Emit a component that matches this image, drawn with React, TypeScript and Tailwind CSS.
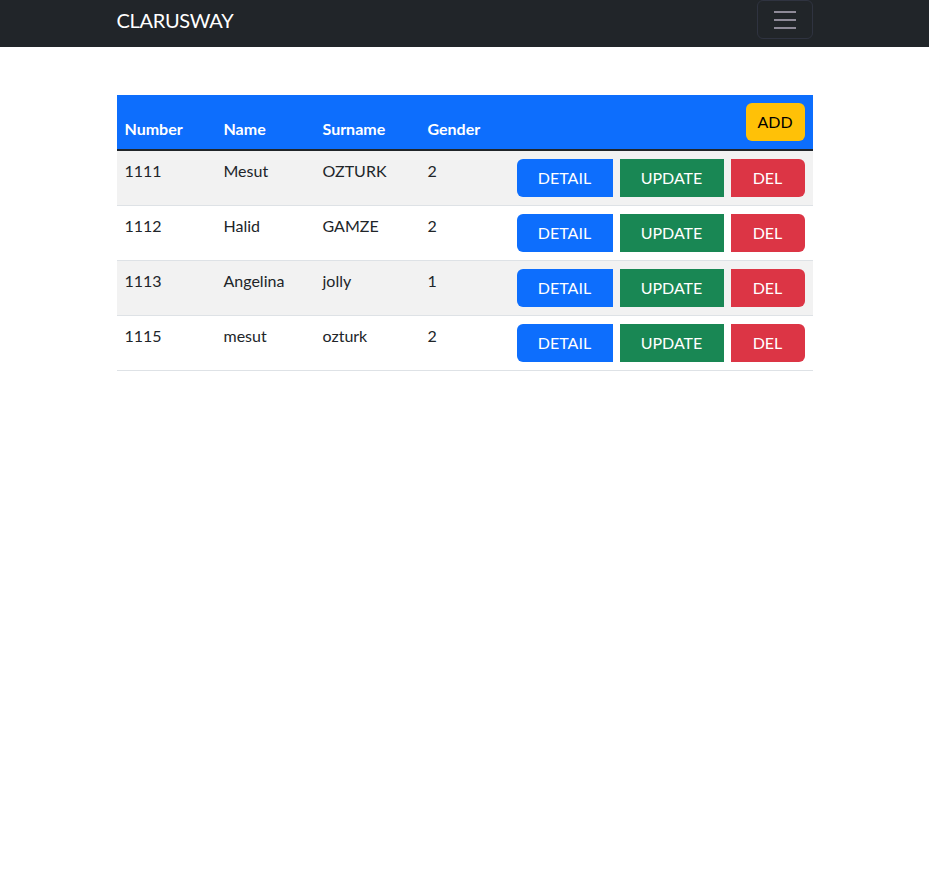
import React from 'react';

interface Person {
  number: string;
  name: string;
  surname: string;
  gender: string;
}

const people: Person[] = [
  { number: '1111', name: 'Mesut', surname: 'OZTURK', gender: '2' },
  { number: '1112', name: 'Halid', surname: 'GAMZE', gender: '2' },
  { number: '1113', name: 'Angelina', surname: 'jolly', gender: '1' },
  { number: '1115', name: 'mesut', surname: 'ozturk', gender: '2' },
];

const Navbar: React.FC = () => (
  <nav className="h-[47px] bg-[#212529]">
    <div className="mx-auto flex w-[696px] items-start justify-between">
      <a href="#" className="pt-[5px] text-[20px] leading-[30px] tracking-[-0.3px] text-white">
        CLARUSWAY
      </a>
      <button
        type="button"
        className="flex h-[39px] w-[56px] items-center justify-center rounded-[6px] border border-[#2f3340]"
      >
        <svg width="30" height="30" viewBox="0 0 30 30">
          <path d="M4 7h22M4 15h22M4 23h22" stroke="#8e8a98" strokeWidth="2" strokeLinecap="butt" />
        </svg>
      </button>
    </div>
  </nav>
);

const App: React.FC = () => {
  return (
    <div className="min-h-screen bg-white text-[16px] leading-6 text-[#212529]" style={{ fontFamily: 'Lato, "Open Sans", sans-serif' }}>
      <Navbar />
      <div className="mx-auto mt-12 w-[696px]">
        <table className="w-full table-fixed border-separate border-spacing-0">
          <thead>
            <tr className="bg-[#0d6efd] text-white">
              <th className="w-[99px] border-b-2 border-[#212529] p-2 text-left align-bottom font-bold">Number</th>
              <th className="w-[99px] border-b-2 border-[#212529] p-2 text-left align-bottom font-bold">Name</th>
              <th className="w-[105px] border-b-2 border-[#212529] p-2 text-left align-bottom font-bold">Surname</th>
              <th className="w-[89px] border-b-2 border-[#212529] p-2 text-left align-bottom font-bold">Gender</th>
              <th className="w-[304px] border-b-2 border-[#212529] p-2 text-right align-bottom">
                <button className="h-[38px] w-[59px] rounded-[6px] bg-[#ffc107] font-normal text-black">ADD</button>
              </th>
            </tr>
          </thead>
          <tbody>
            {people.map((p, i) => (
              <tr key={p.number} className={i % 2 === 0 ? 'bg-[#f2f2f2]' : 'bg-white'}>
                <td className="border-b border-[#dee2e6] p-2 align-top">{p.number}</td>
                <td className="border-b border-[#dee2e6] p-2 align-top">{p.name}</td>
                <td className="border-b border-[#dee2e6] p-2 align-top">{p.surname}</td>
                <td className="border-b border-[#dee2e6] p-2 align-top">{p.gender}</td>
                <td className="border-b border-[#dee2e6] p-2 align-top">
                  <div className="flex gap-[7px]">
                    <button className="h-[38px] w-[96px] rounded-l-[6px] bg-[#0d6efd] text-white">DETAIL</button>
                    <button className="h-[38px] w-[104px] bg-[#198754] text-white">UPDATE</button>
                    <button className="h-[38px] w-[74px] rounded-r-[6px] bg-[#dc3545] text-white">DEL</button>
                  </div>
                </td>
              </tr>
            ))}
          </tbody>
        </table>
      </div>
    </div>
  );
};

export default App;
